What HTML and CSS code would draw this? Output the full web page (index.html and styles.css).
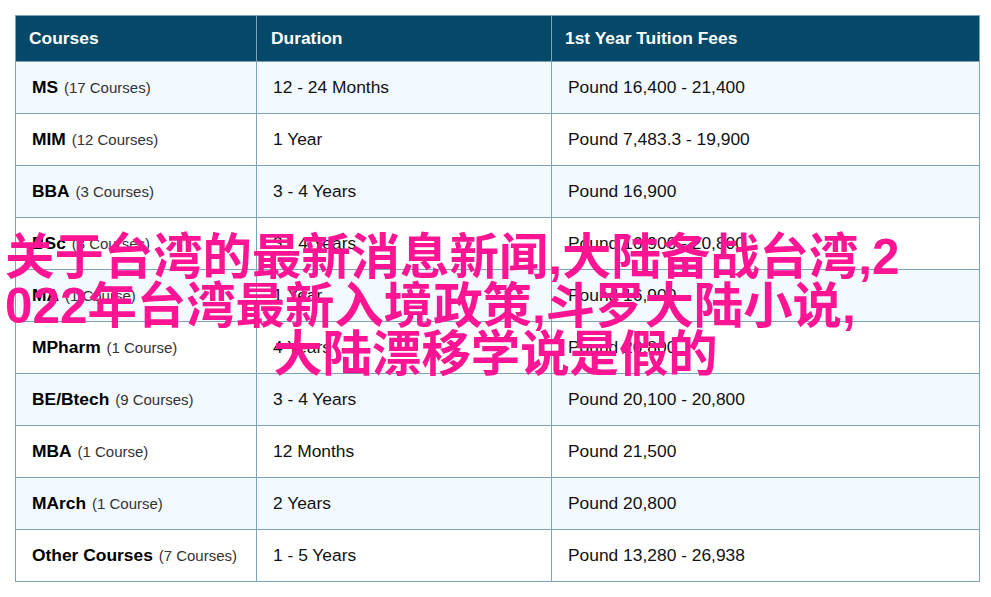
FILE: index.html
```html
<!DOCTYPE html>
<html lang="zh">
<head>
    <meta charset="UTF-8">
    <meta name="viewport" content="width=device-width, initial-scale=1.0">
    <title>关于台湾的最新消息新闻</title>
    <link rel="stylesheet" href="styles.css">
</head>
<body>
    <div class="page">
        <table class="fees">
            <thead>
                <tr><th class="col-course">Courses</th><th class="col-duration">Duration</th><th>1st Year Tuition Fees</th></tr>
            </thead>
            <tbody>
                <tr><td><b>MS</b> <span>(17 Courses)</span></td><td>12 - 24 Months</td><td>Pound 16,400 - 21,400</td></tr>
                <tr><td><b>MIM</b> <span>(12 Courses)</span></td><td>1 Year</td><td>Pound 7,483.3 - 19,900</td></tr>
                <tr><td><b>BBA</b> <span>(3 Courses)</span></td><td>3 - 4 Years</td><td>Pound 16,900</td></tr>
                <tr><td><b>BSc</b> <span>(3 Courses)</span></td><td>3 - 4 Years</td><td>Pound 16,900 - 20,800</td></tr>
                <tr><td><b>MA</b> <span>(1 Course)</span></td><td>1 Year</td><td>Pound 16,900</td></tr>
                <tr><td><b>MPharm</b> <span>(1 Course)</span></td><td>4 Years</td><td>Pound 20,800</td></tr>
                <tr><td><b>BE/Btech</b> <span>(9 Courses)</span></td><td>3 - 4 Years</td><td>Pound 20,100 - 20,800</td></tr>
                <tr><td><b>MBA</b> <span>(1 Course)</span></td><td>12 Months</td><td>Pound 21,500</td></tr>
                <tr><td><b>MArch</b> <span>(1 Course)</span></td><td>2 Years</td><td>Pound 20,800</td></tr>
                <tr><td><b>Other Courses</b> <span>(7 Courses)</span></td><td>1 - 5 Years</td><td>Pound 13,280 - 26,938</td></tr>
            </tbody>
        </table>
        <h1 class="headline">
            <div>关于台湾的最新消息新闻,大陆备战台湾,2</div>
            <div>022年台湾最新入境政策,斗罗大陆小说,</div>
            <div class="last">大陆漂移学说是假的</div>
        </h1>
    </div>
</body>
</html>
```

FILE: styles.css
```css
body {
    margin: 0;
    background-color: #fff;
    font-family: "Liberation Sans", Arial, sans-serif;
}
.page {
    position: relative;
    height: 597px;
    padding: 15px;
    box-sizing: border-box;
    overflow: hidden;
}
.fees {
    width: 965px;
    table-layout: fixed;
    border-collapse: collapse;
    color: #111;
    font-size: 17.4px;
}
.fees th, .fees td {
    border: 1px solid #7ba4bb;
    text-align: left;
}
.fees th {
    height: 45px;
    padding: 0 14px 0 13px;
    background-color: #054867;
    color: #fff;
    font-size: 17.4px;
}
.fees th.col-course {
    width: 213px;
}
.fees th.col-duration {
    width: 266px;
    padding-left: 14px;
}
.fees td {
    height: 51px;
    padding: 0 16px;
}
.fees tbody tr:nth-child(odd) td {
    background-color: #f2f9ff;
}
.fees td b {
    color: #000;
    margin-right: 1px;
}
.fees td span {
    color: #333;
    font-size: 15px;
}
.headline {
    position: absolute;
    top: 233px;
    left: 5px;
    width: 981px;
    margin: 0;
    color: #ff1493;
    font-family: "Liberation Sans", "Noto Sans CJK SC", sans-serif;
    font-size: 49.4px;
    font-weight: bold;
    line-height: 48.5px;
}
.headline .last {
    text-align: center;
}
```
